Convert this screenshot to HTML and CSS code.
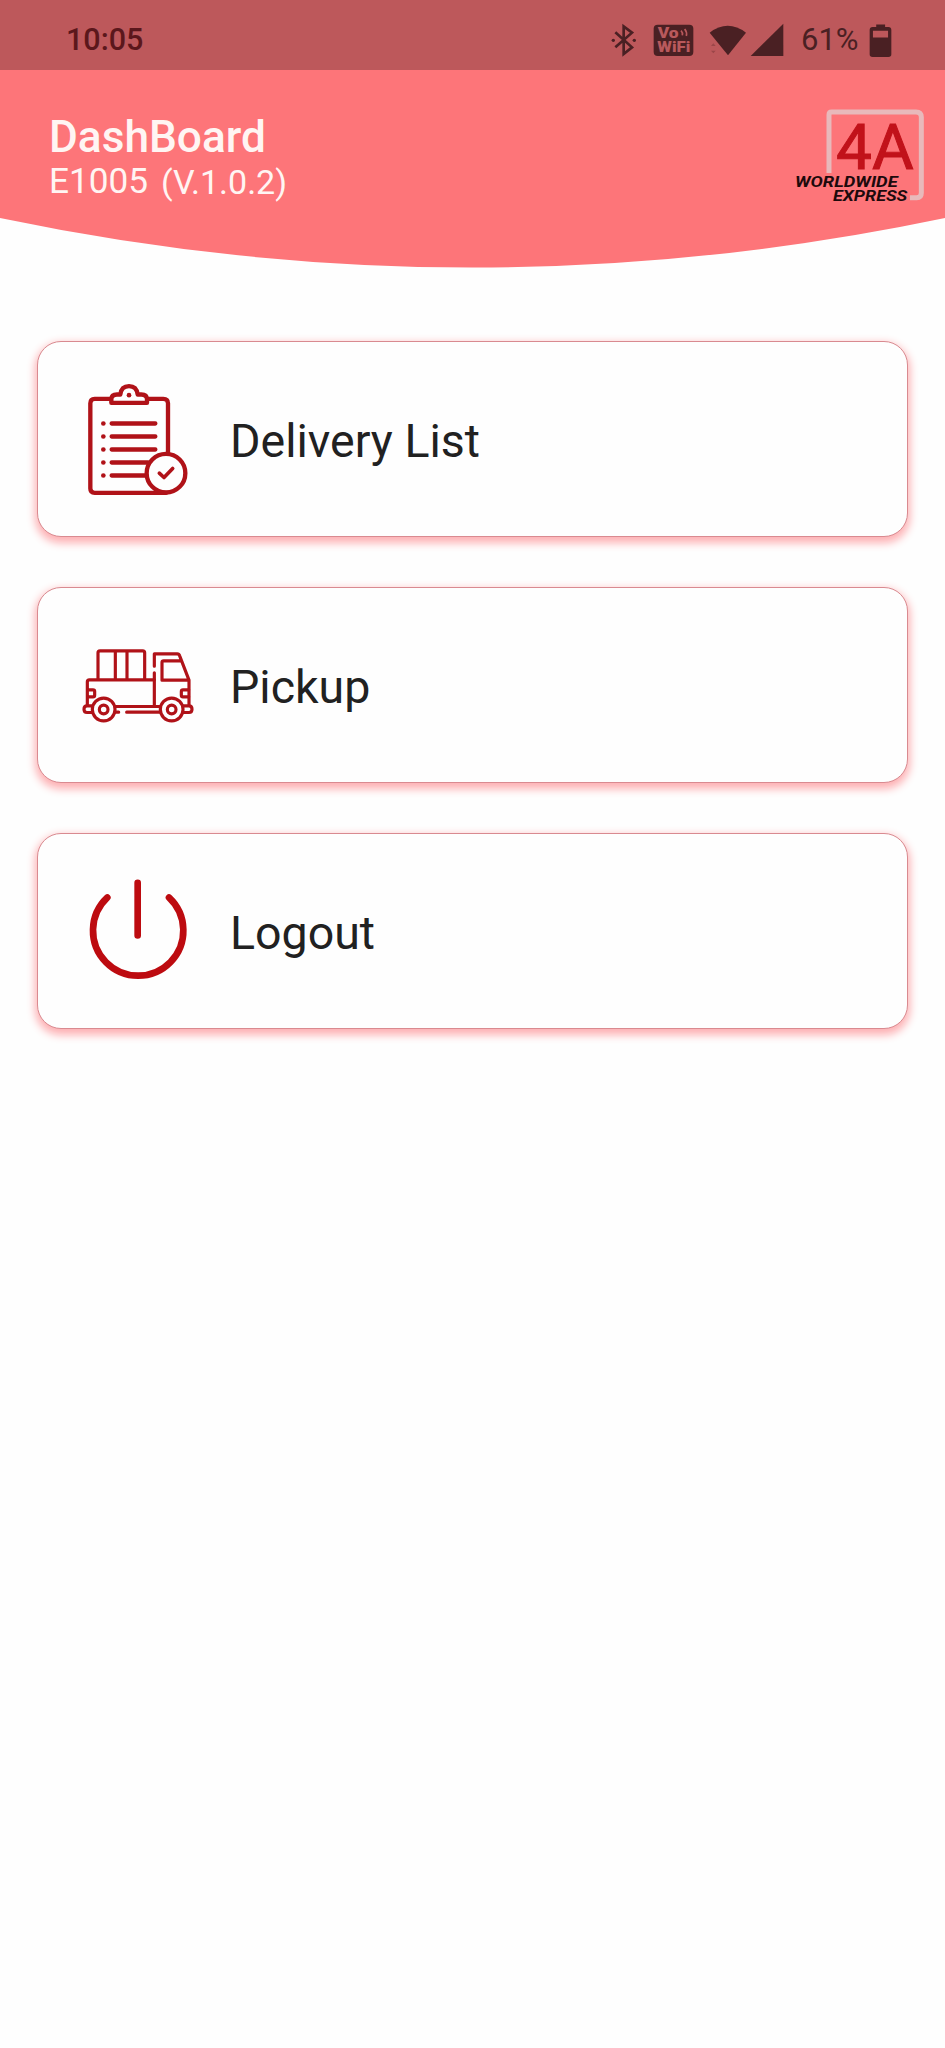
FILE: index.html
```html
<!DOCTYPE html>
<html lang="en">
<head>
    <meta charset="UTF-8">
    <meta name="viewport" content="width=device-width, initial-scale=1.0">
    <title>DashBoard</title>
    <link rel="stylesheet" href="styles.css">
</head>
<body>

    <div class="status-bar">
        <span class="time">10:05</span>
        <!-- bluetooth, vowifi, wifi, signal -->
        <svg class="status-icons" viewBox="0 0 600 210">
            <path d="M76 97L126 142L101 162V79L126 98L76 142" fill="none" stroke="#4a2023" stroke-width="8"/>
            <circle cx="70" cy="121" r="5"/>
            <circle cx="133" cy="121" r="5"/>
            <rect x="191" y="74" width="119" height="94" rx="12"/>
            <text class="vo" x="203" y="114" textLength="63" lengthAdjust="spacingAndGlyphs">Vo</text>
            <text class="vo" x="202" y="156" textLength="99" lengthAdjust="spacingAndGlyphs">WiFi</text>
            <path d="M273 92q6 6 4 14M284 87q8 10 5 21" fill="none" stroke="#b9595c" stroke-width="5"/>
            <path d="M359 98Q413 57 468 98L414 166Z"/>
            <path d="M363 138l7-8 7 8zM363 152h14l-7 8z" fill="#9c4649"/>
            <path d="M580 71V168H482Z"/>
        </svg>
        <span class="percent">61%</span>
        <svg class="battery" viewBox="835 70 70 100">
            <path d="M857 71h27v8h10q9 0 9 9v74q0 8-9 8h-48q-9 0-9-8v-74q0-9 9-9h11zM847 90v21h46v-21z" fill-rule="evenodd"/>
        </svg>
    </div>

    <header>
        <div class="titles">
            <h1>DashBoard</h1>
            <div class="user">
                <span>E1005</span>
                <span class="version">(V.1.0.2)</span>
            </div>
        </div>
        <svg class="logo" viewBox="40 50 400 300">
            <path d="M145 248V73Q145 65 153 65H406Q422 65 422 81V308Q422 322 408 322H388" fill="none" stroke="#e8b9bb" stroke-width="15"/>
            <text class="logo-4a" x="166" y="235" textLength="233" lengthAdjust="spacingAndGlyphs">4A</text>
            <text class="logo-name" x="43" y="290" textLength="308" lengthAdjust="spacingAndGlyphs">WORLDWIDE</text>
            <text class="logo-name" x="157" y="333" textLength="223" lengthAdjust="spacingAndGlyphs">EXPRESS</text>
        </svg>
    </header>
    <svg class="curve" viewBox="0 0 945 50" preserveAspectRatio="none">
        <path d="M0 0Q472.5 99 945 0Z"/>
    </svg>

    <main class="menu">
        <div class="card">
            <svg class="icon" viewBox="180 154.5 345 345">
                <g stroke-width="13">
                    <path d="M270 205H224Q211 205 211 218V474Q211 487 224 487H438M386 205H430Q444 205 444 218V366"/>
                    <path d="M274 217V207Q274 192 291 192H301Q304 167 327 167T353 192H364Q381 192 381 207V217Z"/>
                    <path d="M275 279H406M275 318H406M275 357H406M275 396H384M275 435H376"/>
                    <circle cx="438" cy="428" r="58"/>
                    <path d="M418 428L432 441L458 414" stroke-width="11"/>
                </g>
                <g class="dots">
                    <circle cx="327" cy="194" r="7"/>
                    <circle cx="250" cy="279" r="7"/>
                    <circle cx="250" cy="318" r="7"/>
                    <circle cx="250" cy="357" r="7"/>
                    <circle cx="250" cy="396" r="7"/>
                    <circle cx="250" cy="435" r="7"/>
                </g>
            </svg>
            <span>Delivery List</span>
        </div>

        <div class="card">
            <svg class="icon" viewBox="180 142.5 345 345">
                <g stroke-width="9.5">
                    <path d="M234 296V217Q234 211 240 211H368Q374 211 374 217V296M286 213V296M321 213V296"/>
                    <path d="M403 257V220H472Q477 220 479 226L507 299V372M403 277V376M483 241H431Q426 241 426 246V299H505"/>
                    <path d="M403 298H208Q202 298 202 304V374M203 328H219Q224 328 224 333V344Q224 349 219 349H203M506 328H489Q484 328 484 333V344Q484 349 489 349H506"/>
                    <path d="M215 376H201Q192 376 192 386T201 396H215M286 378H420M286 395H296M320 395H420M490 376H507Q516 376 516 386T507 396H490"/>
                    <circle cx="251" cy="387" r="34"/>
                    <circle cx="251" cy="387" r="13"/>
                    <circle cx="455" cy="387" r="34"/>
                    <circle cx="455" cy="387" r="13"/>
                </g>
            </svg>
            <span>Pickup</span>
        </div>

        <div class="card">
            <svg class="icon power" viewBox="180 130.5 345 345">
                <path d="M262 201A135.500 135.500 0 1 0 447 201M353 157V315" stroke-width="20"/>
            </svg>
            <span>Logout</span>
        </div>
    </main>

</body>
</html>
```
FILE: styles.css
```css
body {
    font-family: Roboto, sans-serif;
    background-color: #fefefe;
    color: #212121;
    margin: 0;
    min-height: 100vh;
}
.status-bar {
    display: flex;
    align-items: center;
    height: 70px;
    box-sizing: border-box;
    padding: 0 53px 0 66px;
    background-color: #bd585b;
    color: #5b171c;
    font-size: 30.500px;
    font-weight: 500;
}
.time {
    flex: 1;
    padding-top: 8px;
}
.status-icons {
    width: 200px;
    height: 70px;
    fill: #4a2023;
}
.vo {
    font-family: Roboto, sans-serif;
    font-size: 43px;
    font-weight: 900;
    fill: #b9595c;
}
.percent {
    width: 68px;
    margin-left: 11px;
    padding-top: 9px;
    color: #4a2023;
    font-size: 31px;
    font-weight: 400;
}
.battery {
    width: 23px;
    height: 33px;
    margin-top: 10px;
    fill: #4a2023;
}
header {
    display: flex;
    justify-content: space-between;
    align-items: flex-start;
    height: 148px;
    box-sizing: border-box;
    padding: 37px 18px 0 49px;
    background-color: #fd7579;
    color: #fff5f3;
}
h1 {
    margin: 6px 0 0;
    font-size: 44.200px;
    font-weight: 500;
    line-height: 48px;
}
.user {
    display: flex;
    align-items: flex-start;
    gap: 13px;
    margin-top: -1px;
    font-size: 35.200px;
    line-height: 42px;
}
.version {
    padding-top: 1px;
    font-size: 34px;
}
.logo {
    width: 133.333px;
    height: 100px;
}
.logo-4a {
    font-family: Roboto, sans-serif;
    font-size: 190px;
    fill: #c1121a;
    stroke: #c1121a;
    stroke-width: 3px;
}
.logo-name {
    font-family: Roboto, sans-serif;
    font-size: 46px;
    font-weight: bold;
    font-style: italic;
    fill: #1d0a0c;
}
.curve {
    display: block;
    width: 100%;
    height: 50px;
    fill: #fd7579;
}
.menu {
    display: flex;
    flex-direction: column;
    gap: 50px;
    padding: 73px 37px 50px;
}
.card {
    display: flex;
    align-items: center;
    gap: 35px;
    height: 196px;
    box-sizing: border-box;
    padding-left: 42px;
    border: 1px solid #d98a90;
    border-radius: 24px;
    background-color: #fefefe;
    box-shadow: 0 4px 9px 2px #fdb0b3;
    font-size: 46.500px;
}
.card span {
    padding-top: 3px;
}
.icon {
    width: 115px;
    height: 115px;
    fill: none;
    stroke: #b01218;
    stroke-linecap: round;
    stroke-linejoin: round;
}
.power {
    stroke: #bd0b10;
}
.dots {
    fill: #b01218;
    stroke: none;
}
```
